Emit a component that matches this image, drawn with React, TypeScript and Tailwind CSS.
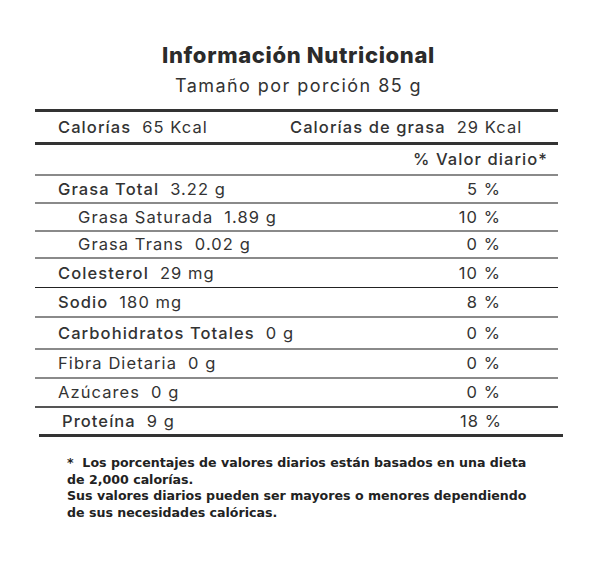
const rows = [
  { label: "Grasa Total", value: "3.22 g", pct: "5 %", bold: true, indent: false, h: "h-[28px]", line: "border-[#8a8a8a] border-b-2" },
  { label: "Grasa Saturada", value: "1.89 g", pct: "10 %", bold: false, indent: true, h: "h-[28px]", line: "border-[#8a8a8a] border-b-2" },
  { label: "Grasa Trans", value: "0.02 g", pct: "0 %", bold: false, indent: true, h: "h-[27px]", line: "border-[#8a8a8a] border-b-2" },
  { label: "Colesterol", value: "29 mg", pct: "10 %", bold: true, indent: false, h: "h-[29px]", line: "border-[#222] border-b" },
  { label: "Sodio", value: "180 mg", pct: "8 %", bold: true, indent: false, h: "h-[30px]", line: "border-[#8a8a8a] border-b-2" },
  { label: "Carbohidratos Totales", value: "0 g", pct: "0 %", bold: true, indent: false, h: "h-[32px]", line: "border-[#8a8a8a] border-b-2" },
  { label: "Fibra Dietaria", value: "0 g", pct: "0 %", bold: false, indent: false, h: "h-[29px]", line: "border-[#8a8a8a] border-b-2" },
  { label: "Azúcares", value: "0 g", pct: "0 %", bold: false, indent: false, h: "h-[29px]", line: "border-[#555] border-b-2" },
];

export default function App() {
  return (
    <div className="w-[597px] h-[565px] bg-white text-[#333] font-['Inter',sans-serif]">
      <div className="pt-[41px] text-center">
        <h1 className="text-[22px] font-extrabold leading-[28px] tracking-[0.03em] text-[#2b2b2b]">
          Información Nutricional
        </h1>
        <p className="mt-[5px] text-[18px] leading-[24px] tracking-[0.08em]">
          Tamaño por porción 85 g
        </p>
      </div>

      <div className="ml-[35px] mt-[11px] w-[523px] tracking-[0.065em] text-[16.5px]">
        <div className="h-[3px] bg-[#333]" />
        <div className="flex h-[30px] items-center pl-[23px]">
          <span className="w-[232px]">
            <span className="font-medium">Calorías</span>
            <span className="ml-[11px]">65 Kcal</span>
          </span>
          <span>
            <span className="font-medium">Calorías de grasa</span>
            <span className="ml-[11px]">29 Kcal</span>
          </span>
        </div>
        <div className="h-[3px] bg-[#333]" />
        <div className="flex h-[31px] items-center justify-end border-b-2 border-[#8a8a8a] pr-[10px] font-medium">
          % Valor diario*
        </div>

        {rows.map((r) => (
          <div
            key={r.label}
            className={`flex items-center justify-between ${r.h} ${r.line} ${r.indent ? "pl-[43px]" : "pl-[23px]"}`}
          >
            <span>
              <span className={r.bold ? "font-medium" : ""}>{r.label}</span>
              <span className="ml-[11px]">{r.value}</span>
            </span>
            <span className="pr-[57px]">{r.pct}</span>
          </div>
        ))}
      </div>

      <div className="ml-[39px] w-[524px] tracking-[0.065em] text-[16.5px]">
        <div className="flex h-[26px] items-center justify-between pl-[23px]">
          <span>
            <span className="font-medium">Proteína</span>
            <span className="ml-[11px]">9 g</span>
          </span>
          <span className="pr-[61px]">18 %</span>
        </div>
        <div className="h-[3px] bg-[#333]" />
      </div>

      <div className="ml-[67px] mt-[18px] w-[472px] font-['DejaVu_Sans',sans-serif] text-[12.6px] font-bold leading-[16.7px] text-[#222]">
        <p>*&nbsp; Los porcentajes de valores diarios están basados en una dieta de 2,000 calorías.</p>
        <p>Sus valores diarios pueden ser mayores o menores dependiendo de sus necesidades calóricas.</p>
      </div>
    </div>
  );
}
